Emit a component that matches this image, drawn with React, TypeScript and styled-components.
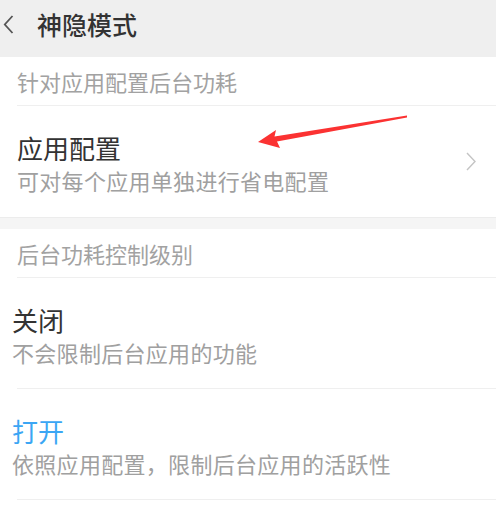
import styled, { createGlobalStyle } from 'styled-components'

const GlobalStyle = createGlobalStyle`
  body {
    margin: 0;
    background: #ffffff;
    font-family: "Noto Sans CJK SC", "Noto Sans", sans-serif;
  }
`

function App() {
  return (
    <Page>
      <GlobalStyle />
      <Header>
        <BackIcon viewBox="0 0 11 19">
          <path d="M9.5 1 L1.8 9.5 L9.5 18" fill="none" stroke="#555" strokeWidth="1.8" />
        </BackIcon>
        <Title>神隐模式</Title>
      </Header>

      <SectionLabel>针对应用配置后台功耗</SectionLabel>
      <Item $indent={17}>
        <ItemText>
          <ItemTitle>应用配置</ItemTitle>
          <ItemDesc>可对每个应用单独进行省电配置</ItemDesc>
        </ItemText>
        <Chevron viewBox="0 0 10 19">
          <path d="M1 1 L9 9.5 L1 18" fill="none" stroke="#c4c4c4" strokeWidth="1.4" />
        </Chevron>
      </Item>

      <Band />

      <SectionLabel>后台功耗控制级别</SectionLabel>
      <Item $indent={12} $bordered>
        <ItemText>
          <ItemTitle>关闭</ItemTitle>
          <ItemDesc>不会限制后台应用的功能</ItemDesc>
        </ItemText>
      </Item>
      <Item $indent={12} $bordered>
        <ItemText>
          <ItemTitle $active>打开</ItemTitle>
          <ItemDesc>依照应用配置，限制后台应用的活跃性</ItemDesc>
        </ItemText>
      </Item>

      <Arrow viewBox="0 0 496 508">
        <polygon
          points="258,142 276,130 274.5,136.5 407,115.5 407,117.5 277,141.5 280,148"
          fill="#fb3232"
        />
      </Arrow>
    </Page>
  )
}

export default App

const Page = styled.div`
  position: relative;
  width: 496px;
  height: 508px;
  overflow: hidden;
  background: #ffffff;
`

const Header = styled.div`
  height: 57px;
  box-sizing: border-box;
  padding: 0 0 9px 3px;
  background: #efefef;
  display: flex;
  align-items: center;
  gap: 23px;
`

const BackIcon = styled.svg`
  width: 11px;
  height: 19px;
`

const Title = styled.div`
  font-size: 25px;
  font-weight: 500;
  color: #333333;
  line-height: 1;
`

const SectionLabel = styled.div`
  margin-left: 17px;
  height: 48px;
  display: flex;
  align-items: center;
  font-size: 22px;
  color: #a2a2a2;
  border-bottom: 1px solid #efefef;
`

const Item = styled.div<{ $indent: number; $bordered?: boolean }>`
  display: flex;
  align-items: center;
  padding-left: ${(p) => p.$indent}px;
  padding-right: 20px;
  height: 111px;
  box-sizing: border-box;
  position: relative;

  &::after {
    content: "";
    display: ${(p) => (p.$bordered ? 'block' : 'none')};
    position: absolute;
    left: 17px;
    right: 0;
    bottom: 0;
    border-bottom: 1px solid #efefef;
  }
`

const ItemText = styled.div`
  flex: 1;
  display: flex;
  flex-direction: column;
  margin-top: 3px;
`

const ItemTitle = styled.div<{ $active?: boolean }>`
  font-size: 26px;
  line-height: 34px;
  color: ${(p) => (p.$active ? '#3ba6f4' : '#333333')};
`

const ItemDesc = styled.div`
  font-size: 22px;
  line-height: 30px;
  color: #a0a0a0;
  letter-spacing: 0.3px;
`

const Chevron = styled.svg`
  width: 10px;
  height: 19px;
`

const Band = styled.div`
  height: 11px;
  background: #f5f5f5;
  border-top: 1px solid #ececec;
`

const Arrow = styled.svg`
  position: absolute;
  left: 0;
  top: 0;
  width: 496px;
  height: 508px;
  pointer-events: none;
`
